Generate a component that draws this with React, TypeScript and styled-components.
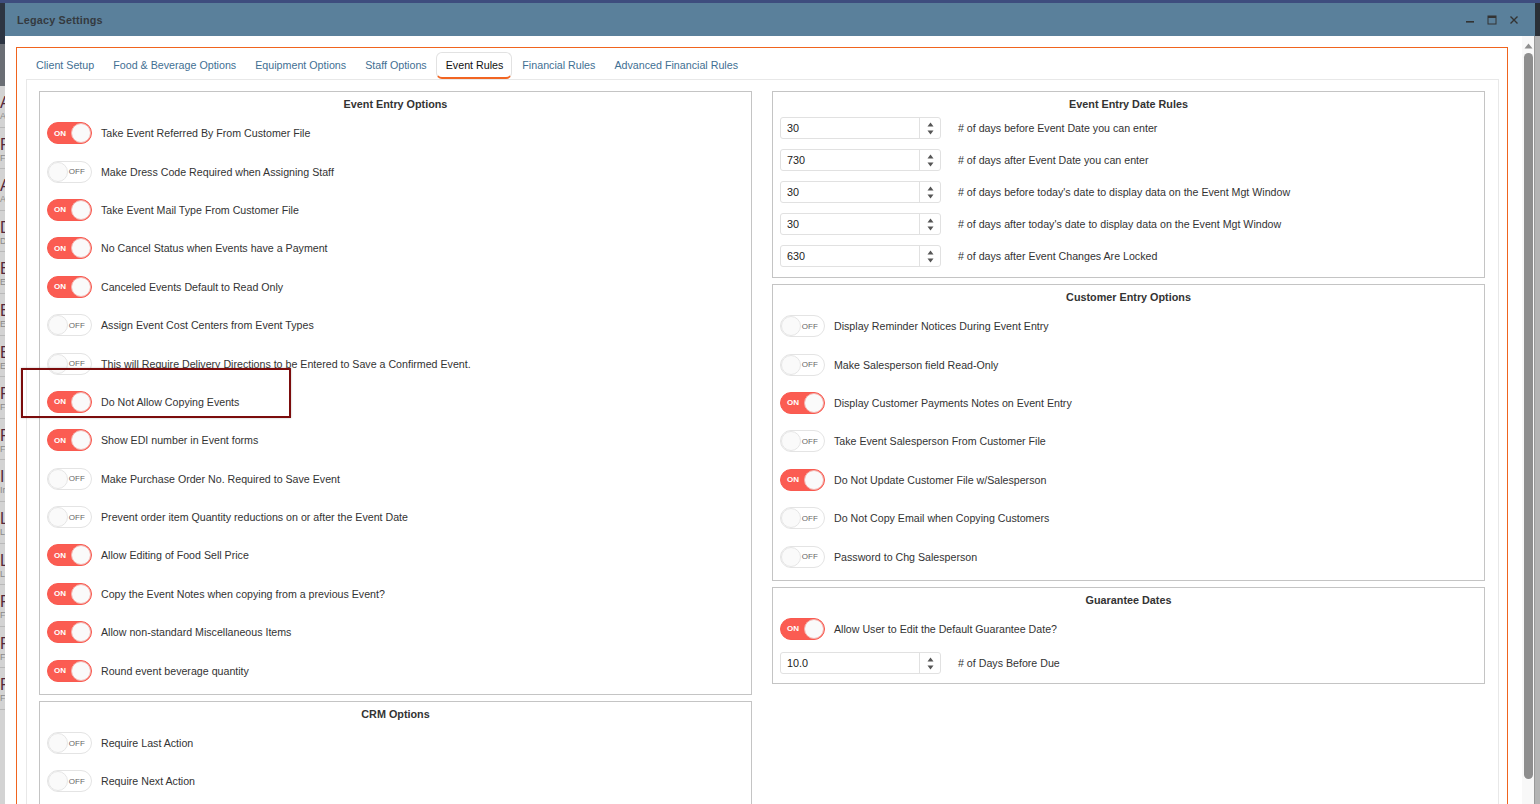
import { createGlobalStyle } from "styled-components";
import styled from "styled-components";

const GlobalStyle = createGlobalStyle`
  html, body {
    margin: 0;
    padding: 0;
    overflow: hidden;
  }
  body {
    font-family: "Liberation Sans", Arial, sans-serif;
    font-size: 11px;
    color: #333;
  }
`;

const Root = styled.div`
  position: relative;
  width: 1540px;
  height: 804px;
  overflow: hidden;
  display: flex;
  flex-direction: column;
  background: #c9c9c9;
`;

const TopStrip = styled.div`
  height: 3px;
  flex: none;
  background: #3e4d7e;
`;

const Stage = styled.div`
  flex: 1;
  display: flex;
  min-height: 0;
`;

// ---- the app behind the dialog (only a few pixels show) ----

const BackStrip = styled.div<{ $side: "left" | "right" }>`
  width: 5px;
  flex: none;
  overflow: hidden;
  display: flex;
  flex-direction: column;
  background: ${(p) => (p.$side === "left" ? "#d3d3d3" : "#b4b4b4")};
`;

const BackHeader = styled.div<{ $tone: string; $h: number }>`
  height: ${(p) => p.$h}px;
  flex: none;
  background: ${(p) => p.$tone};
`;

const BackRow = styled.div`
  height: 41.6px;
  flex: none;
  box-sizing: border-box;
  border-bottom: 1px solid #b9b9b9;
  padding-top: 8px;
  white-space: nowrap;
  font-size: 16px;
  line-height: 17px;
  color: #55283a;

  small {
    display: block;
    font-size: 9px;
    line-height: 11px;
    color: #8a8a8a;
  }
`;

// ---- dialog ----

const Dialog = styled.div`
  flex: 1;
  display: flex;
  flex-direction: column;
  min-width: 0;
  background: #fff;
`;

const TitleBar = styled.div`
  height: 33px;
  flex: none;
  display: flex;
  align-items: center;
  justify-content: space-between;
  padding: 0 16px 0 12px;
  background: #5a809b;
`;

const Title = styled.span`
  font-weight: bold;
  font-size: 10.8px;
  letter-spacing: 0.2px;
  color: #343a40;
`;

const WindowControls = styled.div`
  display: flex;
  align-items: center;
  gap: 12px;

  svg {
    display: block;
  }
`;

const DialogBody = styled.div`
  flex: 1;
  display: flex;
  min-height: 0;
`;

const BodyContent = styled.div`
  flex: 1;
  min-width: 0;
  padding: 11px 14px 0 11px;
  display: flex;
  flex-direction: column;
`;

const ScrollTrack = styled.div`
  width: 13px;
  flex: none;
  display: flex;
  flex-direction: column;
  align-items: center;
  padding-top: 7px;
  gap: 4px;
  background: #f8f8f8;
  border-right: 1px solid #9a9a9a;
  box-sizing: border-box;
`;

const ScrollThumb = styled.div`
  width: 9px;
  height: 726px;
  border-radius: 5px;
  background: #8e8e8e;
  margin-left: 1px;
`;

const OrangeFrame = styled.div`
  flex: 1;
  border: 1px solid #f0641e;
  border-bottom: none;
  padding: 4px 8px 0 9px;
  display: flex;
  flex-direction: column;
`;

const TabList = styled.div`
  display: flex;
  height: 27px;
  flex: none;
`;

const Tab = styled.div<{ $active?: boolean }>`
  display: flex;
  align-items: center;
  padding: 0 8px 0 9px;
  box-sizing: border-box;
  height: 27px;
  font-size: 10.7px;
  white-space: nowrap;
  border: 1px solid ${(p) => (p.$active ? "#e2e2e2" : "transparent")};
  border-bottom: 2px solid ${(p) => (p.$active ? "#f26522" : "transparent")};
  border-radius: 6px;
  color: ${(p) => (p.$active ? "#111" : "#3f6f93")};
  background: #fff;
  position: relative;
  z-index: 1;
`;

const TabPanel = styled.div`
  flex: 1;
  border: 1px solid #e8e8e8;
  border-bottom: none;
  padding: 11px 13px 0 12px;
  display: grid;
  grid-template-columns: 713px 713px;
  column-gap: 20px;
  align-items: start;
`;

const Column = styled.div`
  display: flex;
  flex-direction: column;
  gap: 6px;
`;

const Panel = styled.section<{ $pb?: number }>`
  border: 1px solid #c4c4c4;
  padding: 0 7px ${(p) => p.$pb ?? 3}px;
`;

const PanelHeader = styled.h3`
  margin: 0;
  padding: 6px 0 4px;
  line-height: 12px;
  text-align: center;
  font-size: 10.8px;
  font-weight: bold;
  color: #333;
`;

const ToggleRow = styled.div`
  height: 38.4px;
  display: flex;
  align-items: center;
  gap: 9px;
`;

const Label = styled.span`
  font-size: 10.65px;
  color: #333;
  white-space: nowrap;
`;

const SwitchTrack = styled.div<{ $on: boolean }>`
  position: relative;
  width: 45px;
  height: 22px;
  flex: none;
  box-sizing: border-box;
  border-radius: 11px;
  border: 1px solid ${(p) => (p.$on ? "#f95a50" : "#e4e4e4")};
  background: ${(p) => (p.$on ? "#fb5c52" : "#fff")};
  display: flex;
  align-items: center;
  justify-content: ${(p) => (p.$on ? "flex-start" : "flex-end")};
  padding: ${(p) => (p.$on ? "0 0 0 6px" : "0 6px 0 0")};
`;

const SwitchText = styled.span<{ $on: boolean }>`
  font-size: 8px;
  font-weight: ${(p) => (p.$on ? "bold" : "normal")};
  color: ${(p) => (p.$on ? "#fff" : "#666")};
  letter-spacing: 0.1px;
`;

const SwitchKnob = styled.span<{ $on: boolean }>`
  position: absolute;
  top: 0;
  ${(p) => (p.$on ? "right: 0;" : "left: 0;")}
  width: 20px;
  height: 20px;
  box-sizing: border-box;
  border-radius: 50%;
  background: #fafafa;
  border: 1px solid ${(p) => (p.$on ? "#f3b2ad" : "#e6e6e6")};
`;

const InputRow = styled.div<{ $extra?: boolean }>`
  display: flex;
  align-items: center;
  gap: 17px;
  padding: ${(p) => (p.$extra ? "4px 0 6px" : "3px 0 7px")};
`;

const NumberBox = styled.div`
  width: 161px;
  height: 22px;
  box-sizing: border-box;
  border: 1px solid #e1e1e1;
  border-radius: 3px;
  display: flex;
  flex: none;
`;

const NumberValue = styled.span`
  flex: 1;
  padding-left: 6px;
  line-height: 20px;
  font-size: 10.8px;
  color: #222;
`;

const Spinner = styled.div`
  width: 20px;
  border-left: 1px solid #e1e1e1;
  display: flex;
  flex-direction: column;
  align-items: center;
  justify-content: center;
  gap: 3px;

  svg {
    display: block;
  }
`;

const Highlight = styled.div`
  position: absolute;
  left: 21px;
  top: 368px;
  width: 270px;
  height: 50px;
  box-sizing: border-box;
  border: 2px solid #7b0c0c;
  box-shadow: 0 0 2px rgba(0, 0, 0, 0.25);
  pointer-events: none;
`;

// ---- data ----

type Opt = [boolean, string];

const eventEntry: Opt[] = [
  [true, "Take Event Referred By From Customer File"],
  [false, "Make Dress Code Required when Assigning Staff"],
  [true, "Take Event Mail Type From Customer File"],
  [true, "No Cancel Status when Events have a Payment"],
  [true, "Canceled Events Default to Read Only"],
  [false, "Assign Event Cost Centers from Event Types"],
  [false, "This will Require Delivery Directions to be Entered to Save a Confirmed Event."],
  [true, "Do Not Allow Copying Events"],
  [true, "Show EDI number in Event forms"],
  [false, "Make Purchase Order No. Required to Save Event"],
  [false, "Prevent order item Quantity reductions on or after the Event Date"],
  [true, "Allow Editing of Food Sell Price"],
  [true, "Copy the Event Notes when copying from a previous Event?"],
  [true, "Allow non-standard Miscellaneous Items"],
  [true, "Round event beverage quantity"],
];

const crm: Opt[] = [
  [false, "Require Last Action"],
  [false, "Require Next Action"],
];

const dateRules: [string, string][] = [
  ["30", "# of days before Event Date you can enter"],
  ["730", "# of days after Event Date you can enter"],
  ["30", "# of days before today's date to display data on the Event Mgt Window"],
  ["30", "# of days after today's date to display data on the Event Mgt Window"],
  ["630", "# of days after Event Changes Are Locked"],
];

const customerEntry: Opt[] = [
  [false, "Display Reminder Notices During Event Entry"],
  [false, "Make Salesperson field Read-Only"],
  [true, "Display Customer Payments Notes on Event Entry"],
  [false, "Take Event Salesperson From Customer File"],
  [true, "Do Not Update Customer File w/Salesperson"],
  [false, "Do Not Copy Email when Copying Customers"],
  [false, "Password to Chg Salesperson"],
];

const tabs = [
  "Client Setup",
  "Food & Beverage Options",
  "Equipment Options",
  "Staff Options",
  "Event Rules",
  "Financial Rules",
  "Advanced Financial Rules",
];

const backRows = ["Acme", "Fair", "Atlas", "Dale", "Emer", "Echo", "Elm", "Fern", "Fox", "Iris", "Lark", "Lime", "Finch", "Ford", "Frost"];

// ---- pieces ----

function Switch({ on }: { on: boolean }) {
  return (
    <SwitchTrack $on={on}>
      <SwitchText $on={on}>{on ? "ON" : "OFF"}</SwitchText>
      <SwitchKnob $on={on} />
    </SwitchTrack>
  );
}

function ToggleOption({ on, label }: { on: boolean; label: string }) {
  return (
    <ToggleRow>
      <Switch on={on} />
      <Label>{label}</Label>
    </ToggleRow>
  );
}

function NumberOption({ value, label, extra }: { value: string; label: string; extra?: boolean }) {
  return (
    <InputRow $extra={extra}>
      <NumberBox>
        <NumberValue>{value}</NumberValue>
        <Spinner>
          <svg width="7" height="5" viewBox="0 0 7 5">
            <path d="M3.5 0.5 L6.5 4.5 L0.5 4.5 Z" fill="#555" />
          </svg>
          <svg width="7" height="5" viewBox="0 0 7 5">
            <path d="M0.5 0.5 L6.5 0.5 L3.5 4.5 Z" fill="#555" />
          </svg>
        </Spinner>
      </NumberBox>
      <Label>{label}</Label>
    </InputRow>
  );
}

export default function App() {
  return (
    <>
      <GlobalStyle />
      <Root>
        <TopStrip />
        <Stage>
          <BackStrip $side="left">
            <BackHeader $tone="#2d3542" $h={41} />
            <BackHeader $tone="#6a6e74" $h={42} />
            {backRows.map((r) => (
              <BackRow key={r}>
                {r}
                <small>{r} details</small>
              </BackRow>
            ))}
          </BackStrip>

          <Dialog>
            <TitleBar>
              <Title>Legacy Settings</Title>
              <WindowControls>
                <svg width="10" height="10" viewBox="0 0 10 10">
                  <rect x="1" y="6" width="8" height="1.6" fill="#333" />
                </svg>
                <svg width="10" height="10" viewBox="0 0 10 10">
                  <rect x="1" y="1" width="8" height="8" fill="none" stroke="#333" strokeWidth="1" />
                  <rect x="1" y="1" width="8" height="2" fill="#333" />
                </svg>
                <svg width="10" height="10" viewBox="0 0 10 10">
                  <path d="M1.5 1.5 L8.5 8.5 M8.5 1.5 L1.5 8.5" stroke="#333" strokeWidth="1.4" />
                </svg>
              </WindowControls>
            </TitleBar>

            <DialogBody>
              <BodyContent>
                <OrangeFrame>
                  <TabList>
                    {tabs.map((t) => (
                      <Tab key={t} $active={t === "Event Rules"}>
                        {t}
                      </Tab>
                    ))}
                  </TabList>

                  <TabPanel>
                    <Column>
                      <Panel $pb={4}>
                        <PanelHeader>Event Entry Options</PanelHeader>
                        {eventEntry.map(([on, label]) => (
                          <ToggleOption key={label} on={on} label={label} />
                        ))}
                      </Panel>
                      <Panel>
                        <PanelHeader>CRM Options</PanelHeader>
                        {crm.map(([on, label]) => (
                          <ToggleOption key={label} on={on} label={label} />
                        ))}
                      </Panel>
                    </Column>

                    <Column>
                      <Panel>
                        <PanelHeader>Event Entry Date Rules</PanelHeader>
                        {dateRules.map(([value, label]) => (
                          <NumberOption key={label} value={value} label={label} />
                        ))}
                      </Panel>
                      <Panel $pb={4}>
                        <PanelHeader>Customer Entry Options</PanelHeader>
                        {customerEntry.map(([on, label]) => (
                          <ToggleOption key={label} on={on} label={label} />
                        ))}
                      </Panel>
                      <Panel>
                        <PanelHeader>Guarantee Dates</PanelHeader>
                        <ToggleOption on label="Allow User to Edit the Default Guarantee Date?" />
                        <NumberOption value="10.0" label="# of Days Before Due" extra />
                      </Panel>
                    </Column>
                  </TabPanel>
                </OrangeFrame>
              </BodyContent>

              <ScrollTrack>
                <svg width="9" height="6" viewBox="0 0 9 6">
                  <path d="M4.5 0.5 L8.5 5.5 L0.5 5.5 Z" fill="#8e8e8e" />
                </svg>
                <ScrollThumb />
              </ScrollTrack>
            </DialogBody>
          </Dialog>

          <BackStrip $side="right">
            <BackHeader $tone="#2a3037" $h={33} />
          </BackStrip>
        </Stage>
        <Highlight />
      </Root>
    </>
  );
}
